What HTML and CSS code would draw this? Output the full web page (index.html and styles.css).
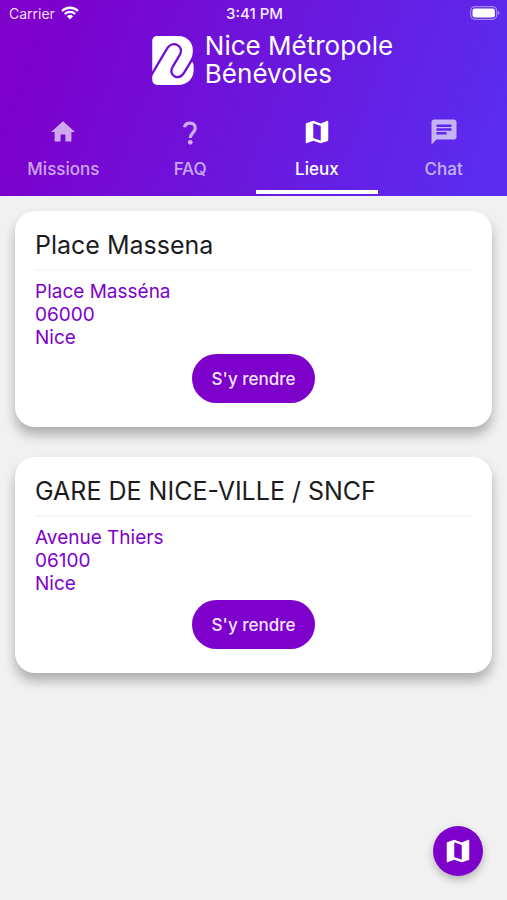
FILE: index.html
```html
<!DOCTYPE html>
<html lang="fr">
<head>
<meta charset="utf-8">
<meta name="viewport" content="width=device-width, initial-scale=1">
<title>Nice Métropole Bénévoles</title>
<link rel="stylesheet" href="styles.css">
</head>
<body>
<svg class="defs" aria-hidden="true">
  <symbol id="map" viewBox="0 0 24 24"><path d="M20.500 3l-.160.030L15 5.100 9 3 3.360 4.900c-.210.070-.360.250-.360.480V20.500c0 .280.220.500.500.500l.160-.030L9 18.900l6 2.100 5.640-1.900c.210-.070.360-.250.360-.480V3.500c0-.280-.220-.500-.500-.500zM15 19l-6-2.110V5l6 2.110V19z"/></symbol>
</svg>
<header class="header">
  <div class="status">
    <div class="carrier">
      <span>Carrier</span>
      <svg class="wifi" viewBox="0 0 18 14" aria-hidden="true">
        <path d="M1 5a11.500 11.500 0 0 1 16 0M3.800 8a7.500 7.500 0 0 1 10.400 0" fill="none" stroke="currentColor" stroke-width="2.400"/>
        <path d="M5.900 10.300a4.500 4.500 0 0 1 6.200 0L9 13.600z" fill="currentColor"/>
      </svg>
    </div>
    <span class="time">3:41 PM</span>
    <svg class="battery" viewBox="0 0 30 14" aria-hidden="true">
      <rect x=".7" y=".7" width="26" height="12.600" rx="4" fill="none" stroke="#fff" stroke-opacity=".45" stroke-width="1.200"/>
      <rect x="2.500" y="2.500" width="22.400" height="9" rx="2.300" fill="#fff"/>
      <path d="M28 5v4c1.800-.7 1.800-3.300 0-4z" fill="#fff" fill-opacity=".5"/>
    </svg>
  </div>
  <div class="brand">
    <svg class="logo" viewBox="0 0 126 148" aria-hidden="true">
      <defs>
        <mask id="ribbon">
          <rect width="126" height="148" fill="#fff"/>
          <path d="M-4 121L43 41C51 27 64 21 76 27C88 33 90 46 83 58L62 93C55 106 58 117 68 122C79 127 90 122 97 110L130 56" fill="none" stroke="#000" stroke-width="7"/>
        </mask>
      </defs>
      <path mask="url(#ribbon)" fill="#fff" d="M16 0H78C106 0 123 19 123 43C123 56 120 66 115 75L123 80C125 85 126 91 126 99C126 128 108 148 78 148H18C6 148 0 141 0 130V16C0 6 6 0 16 0Z"/>
    </svg>
    <h1 class="brand-name">Nice Métropole<br>Bénévoles</h1>
  </div>
  <nav class="tabs">
    <a class="tab" href="#missions">
      <svg class="icon" viewBox="-0.500 -0.500 25 25" aria-hidden="true"><path d="M10 20v-6h4v6h5v-8h3L12 3 2 12h3v8z"/></svg>
      Missions
    </a>
    <a class="tab" href="#faq">
      <svg class="icon" viewBox="0 0 24 24" aria-hidden="true"><path d="M7.600 8.200C8 6.200 9.700 4.900 12 4.900c2.600 0 4.200 1.600 4.200 3.900 0 3.700-4 4-4 8" fill="none" stroke="currentColor" stroke-width="2.600"/><circle cx="12.200" cy="20.200" r="1.900"/></svg>
      FAQ
    </a>
    <a class="tab active" href="#lieux" aria-current="page">
      <svg class="icon" aria-hidden="true"><use href="#map"/></svg>
      Lieux
    </a>
    <a class="tab" href="#chat">
      <svg class="icon" viewBox="0 0 24 24" aria-hidden="true"><path d="M20 2H4c-1.100 0-2 .9-2 2v18l4-4h14c1.100 0 2-.9 2-2V4c0-1.100-.9-2-2-2zM6 9h12v2H6V9zm8 5H6v-2h8v2zm4-6H6V6h12v2z"/></svg>
      Chat
    </a>
  </nav>
</header>
<main class="places">
  <article class="card">
    <h2 class="card-title">Place Massena</h2>
    <address class="address">Place Masséna<br>06000<br>Nice</address>
    <button class="go" type="button">S'y rendre</button>
  </article>
  <article class="card">
    <h2 class="card-title">GARE DE NICE-VILLE / SNCF</h2>
    <address class="address">Avenue Thiers<br>06100<br>Nice</address>
    <button class="go" type="button">S'y rendre</button>
  </article>
</main>
<button class="fab" type="button" aria-label="Carte"><svg class="icon" aria-hidden="true"><use href="#map"/></svg></button>
</body>
</html>
```
FILE: styles.css
```css
* {
  box-sizing: border-box;
}

body {
  margin: 0;
  min-height: 100vh;
  background: #f1f1f1;
  color: #1c1c1e;
  font-family: Inter, "Liberation Sans", sans-serif;
}

.defs {
  position: absolute;
  width: 0;
  height: 0;
}

.header {
  background: linear-gradient(110deg, #7d00cb 8%, #5a2df0 96%);
  color: #fff;
}

.status {
  display: grid;
  grid-template-columns: 1fr auto 1fr;
  align-items: center;
  height: 26px;
  padding: 0 7px 0 9px;
  font-size: 14px;
}

.carrier {
  display: flex;
  align-items: center;
  gap: 6px;
  color: #f0dcfb;
}

.wifi {
  width: 18px;
  height: 14px;
  color: #fff;
}

.time {
  font-size: 15px;
  font-weight: 500;
  color: #f6eaff;
}

.battery {
  width: 30px;
  height: 14px;
  justify-self: end;
}

.brand {
  display: flex;
  justify-content: center;
  align-items: center;
  gap: 11px;
  padding: 6px 0 8px 38px;
}

.logo {
  width: 42px;
  height: 49px;
}

.brand-name {
  margin: 0;
  font-size: 26px;
  font-weight: 400;
  line-height: 28px;
}

.tabs {
  display: grid;
  grid-template-columns: repeat(4, 1fr);
}

.tab {
  display: flex;
  flex-direction: column;
  align-items: center;
  gap: 11px;
  height: 100px;
  margin: 0 2px;
  padding-top: 21px;
  font-size: 17px;
  font-weight: 500;
  line-height: 22px;
  color: rgb(255 255 255 / 65%);
  text-decoration: none;
}

.tab.active {
  color: #fff;
  background: linear-gradient(#fff, #fff) center bottom 2px / 100% 4px no-repeat;
}

.icon {
  width: 30px;
  height: 30px;
  fill: currentColor;
}

.places {
  display: flex;
  flex-direction: column;
  gap: 30px;
  padding: 15px 15px 90px;
}

.card {
  padding: 20px 20px 24px;
  border-radius: 20px;
  background: #fff;
  box-shadow: 0 8px 12px rgb(0 0 0 / 28%);
}

.card-title {
  margin: 0 0 9px;
  padding-bottom: 9px;
  border-bottom: 2px solid #f7f7f7;
  font-size: 25px;
  font-weight: 400;
  line-height: 29px;
}

.address {
  margin-bottom: 5px;
  color: #7d00cb;
  font-size: 19px;
  font-style: normal;
  line-height: 23px;
}

.go {
  display: block;
  height: 49px;
  margin: 0 auto;
  padding: 0 20px;
  border: 0;
  border-radius: 25px;
  background: #7d00cb;
  color: #f7e6ff;
  font: 500 17px Inter, "Liberation Sans", sans-serif;
}

.fab {
  position: fixed;
  right: 24px;
  bottom: 24px;
  display: flex;
  justify-content: center;
  align-items: center;
  width: 50px;
  height: 50px;
  padding: 0;
  border: 0;
  border-radius: 50%;
  background: #7d00cb;
  color: #fff;
  box-shadow: 0 4px 8px rgb(0 0 0 / 25%);
}
```
